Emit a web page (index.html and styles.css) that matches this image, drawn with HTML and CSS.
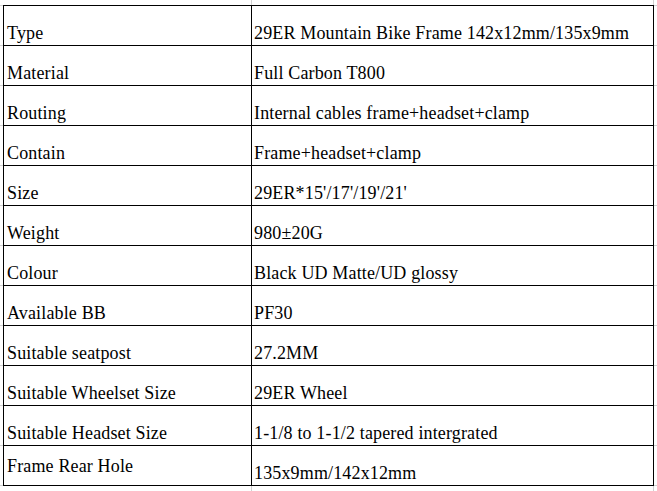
FILE: index.html
```html
<!DOCTYPE html>
<html>
<head>
<meta charset="utf-8">
<link rel="stylesheet" href="styles.css">
</head>
<body>
<div class="sheet">
  <div class="spec">
    <div class="cell key">Type</div><div class="cell val">29ER Mountain Bike Frame 142x12mm/135x9mm</div>
    <div class="cell key">Material</div><div class="cell val">Full Carbon T800</div>
    <div class="cell key">Routing</div><div class="cell val">Internal cables frame+headset+clamp</div>
    <div class="cell key">Contain</div><div class="cell val">Frame+headset+clamp</div>
    <div class="cell key">Size</div><div class="cell val">29ER*15'/17'/19'/21'</div>
    <div class="cell key">Weight</div><div class="cell val">980±20G</div>
    <div class="cell key">Colour</div><div class="cell val">Black UD Matte/UD glossy</div>
    <div class="cell key">Available BB</div><div class="cell val">PF30</div>
    <div class="cell key">Suitable seatpost</div><div class="cell val">27.2MM</div>
    <div class="cell key">Suitable Wheelset Size</div><div class="cell val">29ER Wheel</div>
    <div class="cell key">Suitable Headset Size</div><div class="cell val">1-1/8 to 1-1/2 tapered intergrated</div>
    <div class="cell key raised">Frame Rear Hole</div><div class="cell val">135x9mm/142x12mm</div>
  </div>
</div>
</body>
</html>
```
FILE: styles.css
```css
html, body {
  margin: 0;
  padding: 0;
}
body {
  width: 657px;
  height: 491px;
  overflow: hidden;
  background-color: #ffffff;
  background-image:
    linear-gradient(to right, transparent 251px, #d0d0d0 251px, #d0d0d0 252px, transparent 252px, transparent 653px, #d0d0d0 653px, #d0d0d0 654px, transparent 654px),
    repeating-linear-gradient(to bottom, transparent 0, transparent 5px, #d0d0d0 5px, #d0d0d0 6px, transparent 6px, transparent 40px);
  font-family: "Liberation Serif", "Times New Roman", serif;
  font-size: 18px;
  letter-spacing: 0.15px;
  color: #000;
}
.sheet {
  padding: 5px 0 0 3px;
}
.spec {
  display: grid;
  grid-template-columns: 247px 401px;
  grid-auto-rows: 39px;
  gap: 1px;
  padding: 1px;
  width: max-content;
  background: #000;
}
.cell {
  background: #fff;
  display: flex;
  align-items: flex-end;
  line-height: 20px;
  padding-bottom: 2px;
  white-space: nowrap;
}
.key {
  padding-left: 3px;
}
.val {
  padding-left: 2px;
}
.raised {
  padding-bottom: 9px;
}
```
